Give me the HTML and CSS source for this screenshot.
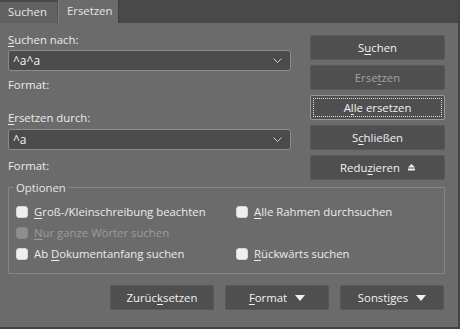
FILE: index.html
```html
<!DOCTYPE html>
<html lang="de">
<head>
    <meta charset="UTF-8">
    <title>Suchen und Ersetzen</title>
    <link rel="stylesheet" href="styles.css">
</head>
<body>
    <div class="dialog">
        <!-- Tabs -->
        <div class="tabbar">
            <div class="tab">Suchen</div>
            <div class="tab active">Ersetzen</div>
        </div>

        <div class="content">
            <div class="fields">
                <div class="label first"><u>S</u>uchen nach:</div>
                <div class="combo">
                    <span>^a^a</span>
                    <svg class="chevron" width="9" height="5" viewBox="0 0 9 5"><path d="M0.5 0.5 L4.5 4.5 L8.5 0.5" fill="none" stroke="#d0d0d0" stroke-width="1"/></svg>
                </div>
                <div class="label format">Format:</div>

                <div class="label"><u>E</u>rsetzen durch:</div>
                <div class="combo">
                    <span>^a</span>
                    <svg class="chevron" width="9" height="5" viewBox="0 0 9 5"><path d="M0.5 0.5 L4.5 4.5 L8.5 0.5" fill="none" stroke="#d0d0d0" stroke-width="1"/></svg>
                </div>
                <div class="label format last">Format:</div>
            </div>

            <div class="actions">
                <button class="btn"><span>S<u>u</u>chen</span></button>
                <button class="btn disabled"><span>Erse<u>t</u>zen</span></button>
                <button class="btn focused"><span class="focus-ring"><span>A<u>l</u>le ersetzen</span></span></button>
                <button class="btn"><span>S<u>c</u>hließen</span></button>
                <button class="btn"><span>Redu<u>z</u>ieren</span>
                    <svg class="icon-up" width="7" height="7" viewBox="0 0 7 7"><path d="M3.5 0 L7 3.5 L0 3.5 Z" fill="#f0f0f0"/><rect x="0" y="4.5" width="7" height="2" fill="#f0f0f0"/></svg>
                </button>
            </div>
        </div>

        <!-- Optionen -->
        <fieldset class="options">
            <legend>Optionen</legend>
            <label class="check"><span class="box"></span><span><u>G</u>roß-/Kleinschreibung beachten</span></label>
            <label class="check"><span class="box"></span><span><u>A</u>lle Rahmen durchsuchen</span></label>
            <label class="check disabled"><span class="box"></span><span><u>N</u>ur ganze Wörter suchen</span></label>
            <span></span>
            <label class="check"><span class="box"></span><span>Ab <u>D</u>okumentanfang suchen</span></label>
            <label class="check"><span class="box"></span><span><u>R</u>ückwärts suchen</span></label>
        </fieldset>

        <div class="footer-buttons">
            <button class="btn"><span>Zurüc<u>k</u>setzen</span></button>
            <button class="btn"><span><u>F</u>ormat</span>
                <svg class="icon-down" width="10" height="6" viewBox="0 0 10 6"><path d="M0 0 L10 0 L5 6 Z" fill="#f0f0f0"/></svg>
            </button>
            <button class="btn"><span>Sonst<u>i</u>ges</span>
                <svg class="icon-down" width="10" height="6" viewBox="0 0 10 6"><path d="M0 0 L10 0 L5 6 Z" fill="#f0f0f0"/></svg>
            </button>
        </div>
    </div>
</body>
</html>
```

FILE: styles.css
```css
/* General */
body {
    margin: 0;
    padding: 0;
    font-family: "Segoe UI", "Open Sans", Arial, sans-serif;
    font-size: 11.35px;
    color: #ececec;
    background-color: #3c3c3c;
}

u {
    text-decoration: underline;
    text-underline-offset: 2px;
}

.dialog {
    width: 458px;
    height: 327px;
    background-color: #6b6b6b;
    border-right: 2px solid #434343;
    border-bottom: 2px solid #434343;
    display: flex;
    flex-direction: column;
}

/* Tabs */
.tabbar {
    display: flex;
    height: 23px;
    background-color: #494949;
    align-items: flex-end;
}

.tab {
    height: 21px;
    line-height: 20px;
    padding: 0 8px;
    box-sizing: border-box;
    background-color: #626262;
    border-right: 1px solid #555;
    color: #e6e6e6;
    width: 58px;
}

.tab.active {
    height: 23px;
    line-height: 22px;
    width: 61px;
    background-color: #6b6b6b;
    border-left: 1px solid #7a7a7a;
    border-right: 1px solid #3f3f3f;
}

/* Main content */
.content {
    display: flex;
    padding: 9px 13px 0 8px;
    gap: 19px;
}

.fields {
    width: 283px;
    display: flex;
    flex-direction: column;
}

.label {
    height: 15px;
    line-height: 15px;
    margin-top: 18px;
    margin-bottom: 4px;
}

.label.first {
    margin-top: 0;
    margin-bottom: 3px;
}

.label.format {
    margin-top: 6px;
    margin-bottom: 0;
}

.label.format.last {
    margin-top: 8px;
}

.combo {
    height: 21px;
    box-sizing: border-box;
    background-color: #4b4b4b;
    border: 1px solid #8c8c8c;
    border-radius: 3px;
    display: flex;
    align-items: center;
    justify-content: space-between;
    padding: 0 8px 0 4px;
    color: #f2f2f2;
    font-size: 12px;
}

.actions {
    width: 135px;
    display: flex;
    flex-direction: column;
    gap: 5px;
    padding-top: 3px;
}

.btn {
    height: 25px;
    box-sizing: border-box;
    background-color: #4f4f4f;
    border: 1px solid #585858;
    border-radius: 2px;
    color: #f2f2f2;
    font-family: inherit;
    font-size: 11.35px;
    display: flex;
    align-items: center;
    justify-content: center;
    gap: 8px;
    padding: 0;
}

.btn.disabled {
    color: #a2a2a2;
}

.btn.focused {
    border: 1px solid #9a9a9a;
    padding: 2px;
}

.focus-ring {
    flex: 1;
    align-self: stretch;
    display: flex;
    align-items: center;
    justify-content: center;
    border: 1px dotted #e0e0e0;
}

/* Optionen group */
.options {
    margin: 0 13px 0 8px;
    padding: 9px 8px 12px 7px;
    border: 1px solid #848484;
    display: grid;
    grid-template-columns: 220px 1fr;
    row-gap: 6px;
}

.options legend {
    padding: 0 2px;
    margin-left: -2px;
    color: #e6e6e6;
}

.check {
    display: flex;
    align-items: center;
    height: 15px;
    gap: 6px;
}

.check .box {
    width: 12px;
    height: 12px;
    box-sizing: border-box;
    background-color: #efefef;
    border: 1px solid #d6d6d6;
    border-radius: 3px;
}

.check.disabled {
    color: #9c9c9c;
}

.check.disabled .box {
    background-color: #8e8e8e;
    border-color: #888;
}

/* Bottom buttons */
.footer-buttons {
    display: flex;
    justify-content: flex-end;
    gap: 11px;
    padding: 11px 14px 0 0;
}

.footer-buttons .btn {
    width: 104px;
}
```
